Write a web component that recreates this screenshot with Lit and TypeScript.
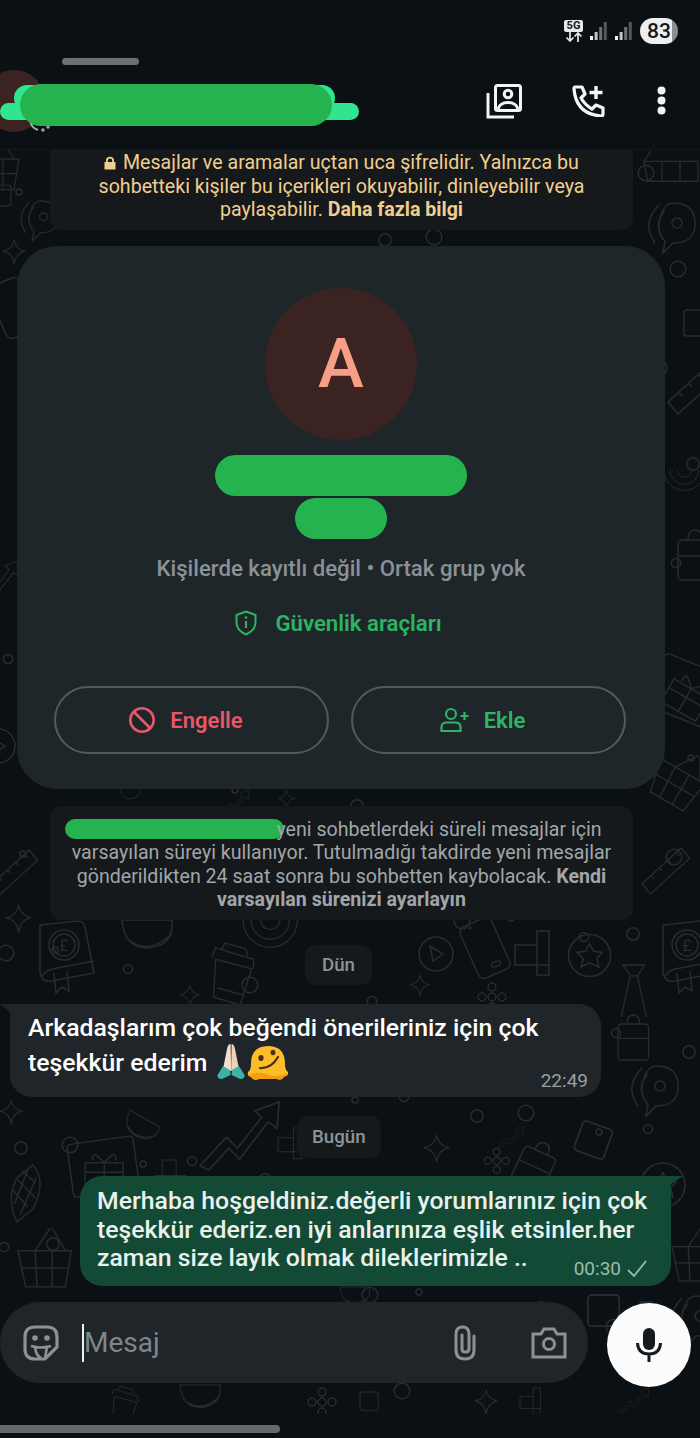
import { LitElement, html, css, svg } from 'lit';
import { customElement } from 'lit/decorators.js';

// wallpaper doodles, each drawn in a box of roughly 60x60
const shapes: Record<string, unknown> = {
  book: svg`<path d="M6 4 L44 0 Q50 0 51 6 L60 52 L18 60 Q8 62 6 52 Z"/><circle cx="30" cy="24" r="15"/><circle cx="30" cy="24" r="11"/><text x="30" y="30" font-size="16" text-anchor="middle" fill="#272c30" stroke="none" font-family="Roboto">£</text><path d="M8 56 Q10 50 18 48 L60 40 M20 52 L22 72 L28 66 L35 70 L33 50"/>`,
  cup: svg`<path d="M10 14 L48 24 L36 62 L8 54 Z M6 12 L10 2 L50 14 L50 24 M16 4 L20 -3 L42 3 L44 10 M12 44 L40 52"/>`,
  phone: svg`<rect x="10" y="0" width="34" height="56" rx="6" transform="rotate(-24 27 28)"/><ellipse cx="38" cy="44" rx="5" ry="2.5" transform="rotate(-24 38 44)"/><circle cx="12" cy="8" r="1"/>`,
  blocks: svg`<path d="M0 14 H22 V0 H34 V44 H22 V34 H0 Z M22 14 V34 H34"/>`,
  star: svg`<circle cx="30" cy="30" r="20"/><path d="M30 19 L34 26 L42 27 L37 33 L39 41 L30 37 L22 41 L24 33 L18 27 L26 26 Z"/>`,
  play: svg`<circle cx="26" cy="26" r="17"/><path d="M20 18 L33 26 L23 33 Z"/>`,
  tie: svg`<path d="M10 0 L34 0 L26 12 L18 12 Z M18 12 L8 58 M26 12 L36 58"/>`,
  chart: svg`<path d="M0 58 L24 32 L34 42 L56 14 L50 8 L72 0 L70 24 L62 18 L36 52 L26 42 L8 62 Z"/>`,
  gift: svg`<rect x="0" y="0" width="70" height="56" rx="4" transform="rotate(-8 35 28)"/><rect x="16" y="24" width="40" height="26"/><path d="M36 24 V50 M16 34 H56 M36 24 Q22 8 24 22 M36 24 Q50 8 48 22"/>`,
  corn: svg`<path d="M18 0 Q36 14 26 46 L12 62 Q-4 40 4 16 Z M5 18 L27 34 M8 8 L24 18 M2 30 L20 44 M14 4 L6 44 M24 12 L14 54"/>`,
  basket: svg`<path d="M0 24 H56 L50 62 H8 Z M18 24 L34 0 M36 0 L50 24 M4 42 H52 M18 24 L20 62 M36 24 L36 62"/>`,
  grid: svg`<path d="M0 6 H60 V28 H4 Z M20 6 V28 M40 6 V28 M0 6 L8 -6"/>`,
  waves: svg`<path d="M10 46 Q-4 26 14 8 M18 42 Q8 26 20 14 M28 6 Q52 6 50 30 Q48 46 28 46 L18 56 L20 44 Q10 34 16 18 Q20 6 28 6 Z"/><circle cx="32" cy="26" r="5"/>`,
  ruler: svg`<path d="M0 42 L46 0 L56 12 L10 54 Z M10 32 L14 36 M20 23 L24 27 M30 14 L34 18 M40 5 L44 9"/>`,
  sparkle: svg`<path d="M14 0 Q16 12 28 14 Q16 16 14 30 Q12 16 0 14 Q12 12 14 0 Z"/>`,
  flower: svg`<circle cx="12" cy="12" r="4"/><circle cx="12" cy="2" r="4"/><circle cx="22" cy="12" r="4"/><circle cx="12" cy="22" r="4"/><circle cx="2" cy="12" r="4"/>`,
  dish: svg`<path d="M0 0 H50 Q52 26 26 28 Q2 28 0 0 Z M10 22 Q28 34 50 14"/>`,
  rings: svg`<path d="M0 0 A34 34 0 0 0 68 0 M10 0 A24 24 0 0 0 58 0 M22 0 A12 12 0 0 0 46 0"/>`,
  square: svg`<rect x="0" y="0" width="26" height="26" rx="3"/>`,
  bag: svg`<rect x="0" y="10" width="34" height="40" rx="4"/><path d="M10 10 Q10 0 17 0 Q24 0 24 10 M0 26 H34"/>`,
};

const placed: [string, number, number, number?, number?][] = [
  ['basket', -26, 140, 0, 0.8], ['grid', 644, 156, 0, 0.9], ['waves', 645, 197, 0, 1],
  ['square', -10, 185, 0, 0.8], ['sparkle', 3, 240, 0, 0.8], ['waves', 18, 196, 0, 0.8],
  ['square', 684, 310, 0, 1], ['ruler', 668, 360, 0, 1], ['bag', 678, 530, 0, 1],
  ['gift', 672, 650, 30, 1], ['phone', -14, 280, 0, 1], ['chart', -30, 560, 0, 0.7],
  ['rings', 664, 470, 0, 0.6], ['play', -28, 720, 0, 1], ['basket', 672, 740, 30, 0.9],
  ['dish', 120, 788, 0, 0.4], ['chart', 220, 790, 0, 0.4], ['sparkle', 278, 790, 0, 0.6],
  ['ruler', -10, 850, 0, 0.85], ['ruler', 642, 848, 0, 0.85], ['sparkle', 6, 905, 0, 0.9],
  ['book', 34, 921, 0, 1], ['book', 657, 921, 0, 1], ['dish', 122, 920, 0, 1],
  ['cup', 206, 946, 0, 0.95], ['rings', 243, 920, 0, 0.8], ['phone', 458, 920, 0, 1],
  ['play', 410, 928, 0, 1], ['blocks', 515, 931, 0, 1], ['star', 558, 924, 0, 1.05],
  ['tie', 614, 965, 0, 0.9], ['sparkle', 410, 975, 0, 0.7], ['flower', 480, 985, 0, 1],
  ['sparkle', 180, 985, 0, 0.7], ['bag', 618, 1015, 0, 0.9], ['waves', 628, 1060, 0, 1],
  ['sparkle', 0, 1100, 0, 0.8], ['chart', 200, 1102, 0, 1.1], ['dish', 130, 1110, 30, 0.7],
  ['square', 584, 1120, 20, 1.2], ['bag', 530, 1136, 25, 1], ['blocks', 278, 1128, 0, 0.7],
  ['chart', 498, 1126, 0, 0.35], ['gift', 70, 1140, 0, 0.95], ['corn', 16, 1162, 10, 0.95],
  ['sparkle', 424, 1135, 0, 0.9], ['flower', 486, 1150, 0, 0.9], ['star', 630, 1152, 0, 1.1],
  ['blocks', 186, 1160, 90, 0.7], ['basket', 18, 1228, 0, 0.95], ['basket', 672, 1225, 0, 0.9],
  ['square', 588, 1295, 0, 1.2], ['blocks', 618, 1302, 0, 1], ['waves', 668, 1290, 0, 1],
  ['dish', 340, 1287, 0, 0.6], ['cup', 108, 1388, 0, 0.6], ['dish', 180, 1385, 0, 0.8],
  ['flower', 310, 1390, 0, 1], ['sparkle', 475, 1390, 0, 0.8], ['blocks', 520, 1388, 0, 0.6],
  ['square', 360, 1392, 0, 0.7], ['chart', 620, 1388, 0, 0.4],
];

// scattered little rings that fill the gaps of the wallpaper
const rings = Array.from({ length: 130 }, (_, i) => ({
  x: (i * 137 + 19) % 700,
  y: 155 + ((i * 211 + 37) % 1250),
  r: 3 + (i % 4) * 1.6,
}));

@customElement('app-root')
export class AppRoot extends LitElement {
  static styles = css`
    :host {
      display: block;
      position: relative;
      width: 700px;
      height: 1438px;
      overflow: hidden;
      background: #0b1014;
      font-family: Roboto, "Noto Sans", sans-serif;
      color: #fff;
    }
    * { box-sizing: border-box; }

    .wallpaper {
      position: absolute;
      inset: 0;
      fill: none;
      stroke: #272c30;
      stroke-width: 1.5;
    }

    header {
      position: relative;
      height: 150px;
      padding-top: 18px;
      background: #0b1014;
      border-bottom: 1px solid #14191c;
    }
    .status { display: flex; justify-content: flex-end; align-items: center; height: 26px; padding-right: 22px; }
    .net { width: 19px; margin-right: 7px; display: flex; flex-direction: column; align-items: center; }
    .net b {
      width: 19px; height: 12px; border-radius: 2px; background: #e8e8e8; color: #14181b;
      font-size: 11px; line-height: 12px; text-align: center; font-weight: 700;
    }
    .bars { margin-right: 8px; }
    .battery {
      width: 38px; height: 26px; border-radius: 13px; color: #14181b;
      background: linear-gradient(90deg, #efefef 84%, #8b8d8f 84%);
      font-size: 21px; line-height: 26px; text-align: center; font-weight: 500;
    }
    .grabber { width: 77px; height: 7px; margin: 14px 0 0 62px; border-radius: 4px; background: #6d6f72; }
    .bar { display: flex; align-items: center; height: 62px; margin-top: 5px; padding-right: 34px; }
    .avatar {
      width: 62px; height: 62px; margin-left: -17px; padding-left: 16px; border-radius: 50%; background: #3a2320;
      color: #f79f85; font-size: 24px; line-height: 62px; text-align: center; font-weight: 500;
    }
    .spacer { flex: 1; }
    .bar svg { display: block; }
    .photos { margin-right: 50px; }
    .call { margin-right: 52px; }
    .spin { position: absolute; left: 28px; top: 120px; }

    .mark { position: absolute; background: #25b350; border-radius: 22px; }
    .mark.light { background: #2fe68f; }
    .mark.m1 { left: 14px; top: 85px; width: 321px; height: 26px; }
    .mark.m2 { left: 0; top: 103px; width: 359px; height: 17px; }
    .mark.m3 { left: 20px; top: 84px; width: 312px; height: 42px; }

    main { position: relative; display: flex; flex-direction: column; }

    .note {
      align-self: flex-start;
      width: 583px;
      margin-left: 50px;
      background: #15191c;
      border-radius: 12px;
      text-align: center;
    }
    .crypt { height: 80px; padding: 1px 30px 0; color: #f0cf8e; font-size: 19.6px; line-height: 23.5px; border-radius: 0 0 12px 12px; }
    .crypt svg { vertical-align: -1px; margin-right: 2px; }
    .crypt b { font-weight: 700; }

    .card {
      width: 648px;
      height: 543px;
      margin: 16px 0 0 17px;
      padding-top: 42px;
      border-radius: 40px;
      background: #1f262a;
      display: flex;
      flex-direction: column;
      align-items: center;
    }
    .face {
      width: 152px; height: 152px; border-radius: 50%; background: #3a2320; color: #f79f85;
      font-size: 69px; line-height: 152px; text-align: center; font-weight: 500;
    }
    .name { width: 252px; height: 41px; margin-top: 15px; border-radius: 21px; background: #25b350; }
    .name.short { width: 92px; height: 41px; margin-top: 2px; }
    .sub { margin-top: 17px; color: #8b9296; font-size: 22.2px; line-height: 24px; font-weight: 500; }
    .tools {
      display: flex; align-items: center; gap: 18px; margin: 26px 5px 0 0; height: 34px;
      color: #2bb563; font-size: 22.2px; font-weight: 600;
    }
    .actions { display: flex; gap: 22px; margin: 46px 2px 0 0; }
    .btn {
      width: 275px; height: 68px; padding-right: 12px; border: 2px solid #55595c; border-radius: 34px;
      display: flex; align-items: center; justify-content: center; gap: 14px;
      font-size: 22px; font-weight: 600;
    }
    .btn.red { color: #e8566a; }
    .btn.green { color: #2fb467; }

    .sys { height: 114px; margin-top: 17px; padding: 12px 16px 0; color: #a1a6a9; font-size: 19.6px; line-height: 23.3px; }
    .sys b { font-weight: 700; }
    .sys i { display: inline-block; width: 219px; height: 20px; margin: 0 -8px 0 -16px; vertical-align: -3px; border-radius: 10px; background: #25b350; }

    .date {
      align-self: flex-start; height: 40px; padding: 0 19px; border-radius: 10px; background: #15191c;
      color: #8d9397; font-size: 18.7px; line-height: 40px; font-weight: 500;
    }
    .date.d1 { margin: 25px 0 0 305px; padding: 0 17px; }
    .date.d2 { margin: 19px 0 0 297px; padding: 0 15px; height: 42px; line-height: 42px; }

    .msg { position: relative; align-self: flex-start; font-weight: 500; }
    .in {
      width: 591px; height: 93px; margin: 19px 0 0 10px; padding: 6px 13px 0 18px;
      background: #1f2528; border-radius: 0 22px 22px 22px; font-size: 24.8px; line-height: 35px;
    }
    .in::before {
      content: ''; position: absolute; left: -10px; top: 0; width: 22px; height: 18px;
      background: #1f2528; clip-path: polygon(0 0, 100% 0, 100% 100%);
    }
    .in .line { display: flex; align-items: center; margin-top: -2px; }
    .in .line svg { display: block; margin-left: 10px; }
    .in time { display: block; margin-top: -11px; text-align: right; }
    time { color: #9aa0a3; font-size: 19px; line-height: 22px; font-weight: 400; }

    .out {
      width: 591px; height: 110px; margin: 18px 0 0 80px; padding: 11px 14px 0 17px;
      background: #134a36; border-radius: 22px 0 22px 22px; color: #e9f1ee; font-size: 24.8px; line-height: 28.5px;
    }
    .out::after {
      content: ''; position: absolute; right: -12px; top: 0; width: 24px; height: 16px;
      background: #134a36; clip-path: polygon(0 0, 100% 0, 0 100%);
    }
    .out .last { display: flex; justify-content: space-between; }
    .out time { display: flex; align-items: center; gap: 6px; margin: 13px 10px 0 0; color: #9dbaae; line-height: 24px; }

    .compose { display: flex; align-items: flex-start; margin-top: 16px; }
    .input {
      width: 588px; height: 81px; padding: 0 21px 0 23px; border-radius: 40px; background: #1f2528;
      display: flex; align-items: center; color: #7f8689;
    }
    .caret { width: 2px; height: 38px; margin-left: 23px; background: #f0f0f0; }
    .input span { flex: 1; font-size: 28px; line-height: 38px; }
    .clip { margin-right: 53px; }
    .mic {
      width: 84px; height: 84px; margin: 1px 0 0 19px; border-radius: 50%; background: #fbfbfb;
      display: flex; align-items: center; justify-content: center;
    }
    .foot { height: 28px; margin-top: 27px; padding-top: 11px; background: #0b1014; }
    .home { width: 280px; height: 8px; border-radius: 0 4px 4px 0; background: #66686a; }
  `;

  private signal() {
    return html`<svg class="bars" width="17" height="18" viewBox="0 0 17 18">
      <rect x="0" y="14" width="3" height="4" fill="#f0f0f0"/>
      <rect x="4.6" y="10" width="3" height="8" fill="#c4c4c4"/>
      <rect x="9.2" y="5" width="3" height="13" fill="#6e7072"/>
      <rect x="13.8" y="0" width="3" height="18" fill="#54565a"/>
    </svg>`;
  }

  render() {
    return html`
      <svg class="wallpaper" width="700" height="1438" viewBox="0 0 700 1438">
        ${rings.map((d) => svg`<circle cx=${d.x} cy=${d.y} r=${d.r}/>`)}
        ${placed.map(([k, x, y, rot = 0, s = 1]) => svg`<g transform="translate(${x} ${y}) rotate(${rot}) scale(${s})">${shapes[k]}</g>`)}
      </svg>

      <header>
        <div class="status">
          <div class="net">
            <b>5G</b>
            <svg width="18" height="10" viewBox="0 0 18 10" fill="none" stroke="#e8e8e8" stroke-width="1.7">
              <path d="M5 0 V9 M1.5 5.5 L5 9 L8.5 5.5 M13 10 V1 M9.5 4.5 L13 1 L16.5 4.5"/>
            </svg>
          </div>
          ${this.signal()}${this.signal()}
          <div class="battery">83</div>
        </div>
        <div class="grabber"></div>
        <div class="bar">
          <div class="avatar">A</div>
          <div class="spacer"></div>
          <svg class="photos" width="36" height="35" viewBox="0 0 36 35" fill="none" stroke="#f4f4f4" stroke-width="3">
            <rect x="9.5" y="1.5" width="25" height="25" rx="2"/>
            <circle cx="22" cy="10" r="3.8"/>
            <path d="M12 25 Q14 18.5 22 18.5 Q30 18.5 32 25"/>
            <path d="M2 9 V33 H28"/>
          </svg>
          <svg class="call" width="33" height="32" viewBox="0 0 33 32" fill="none" stroke="#f4f4f4" stroke-width="3.2" stroke-linejoin="round">
            <path d="M3 2 H10 L13 9 L9 13 Q13 20 20 24 L24 20 L31 23 V29 Q31 31 29 31 Q4 29 2 4 Q2 2 3 2 Z"/>
            <path d="M24 1 V14 M17.5 7.5 H30.5" stroke-width="3.4"/>
          </svg>
          <svg width="9" height="30" viewBox="0 0 9 30" fill="#f4f4f4">
            <circle cx="4.5" cy="4.5" r="4"/><circle cx="4.5" cy="14.5" r="4"/><circle cx="4.5" cy="24.5" r="4"/>
          </svg>
        </div>
        <svg class="spin" width="24" height="16" viewBox="0 0 24 16" fill="none" stroke="#a8abad" stroke-width="2">
          <path d="M2 0 Q3 8 10 10"/><circle cx="15" cy="10" r=".7"/><circle cx="20" cy="7" r=".7"/>
        </svg>
        <div class="mark light m1"></div>
        <div class="mark light m2"></div>
        <div class="mark m3"></div>
      </header>

      <main>
        <div class="note crypt">
          <svg width="12" height="14" viewBox="0 0 12 14" fill="#f0cf8e">
            <path d="M2 6 V4.5 Q2 .8 6 .8 Q10 .8 10 4.5 V6 H11.5 V13.5 H.5 V6 Z M3.8 6 H8.2 V4.5 Q8.2 2.4 6 2.4 Q3.8 2.4 3.8 4.5 Z"/>
          </svg>
          Mesajlar ve aramalar uçtan uca şifrelidir. Yalnızca bu sohbetteki kişiler bu içerikleri okuyabilir, dinleyebilir veya paylaşabilir. <b>Daha fazla bilgi</b>
        </div>

        <section class="card">
          <div class="face">A</div>
          <div class="name"></div>
          <div class="name short"></div>
          <div class="sub">Kişilerde kayıtlı değil • Ortak grup yok</div>
          <div class="tools">
            <svg width="22" height="26" viewBox="0 0 22 26" fill="none" stroke="#2bb563" stroke-width="2">
              <path d="M11 1.5 L20.5 5 V12 Q20.5 20.5 11 24.5 Q1.5 20.5 1.5 12 V5 Z"/>
              <path d="M11 11 V18" stroke-width="2.2"/><circle cx="11" cy="7.5" r="1.3" fill="#2bb563" stroke="none"/>
            </svg>
            Güvenlik araçları
          </div>
          <div class="actions">
            <div class="btn red">
              <svg width="28" height="28" viewBox="0 0 28 28" fill="none" stroke="#e8566a" stroke-width="2.6">
                <circle cx="14" cy="14" r="11.7"/><path d="M6 6 L22 22"/>
              </svg>
              Engelle
            </div>
            <div class="btn green">
              <svg width="30" height="26" viewBox="0 0 30 26" fill="none" stroke="#2fb467" stroke-width="2.2">
                <circle cx="11" cy="7" r="5"/>
                <path d="M1.5 24 V20 Q1.5 15.5 7 15.5 H15 Q20.5 15.5 20.5 20 V24 Z"/>
                <path d="M24.5 5 V13 M20.5 9 H28.5"/>
              </svg>
              Ekle
            </div>
          </div>
        </section>

        <div class="note sys">
          <i></i>yeni sohbetlerdeki süreli mesajlar için varsayılan süreyi kullanıyor. Tutulmadığı takdirde yeni mesajlar gönderildikten 24 saat sonra bu sohbetten kaybolacak. <b>Kendi varsayılan sürenizi ayarlayın</b>
        </div>

        <div class="date d1">Dün</div>

        <div class="msg in">
          Arkadaşlarım çok beğendi önerileriniz için çok
          <div class="line">
            teşekkür ederim
            <svg width="72" height="38" viewBox="0 0 72 38">
              <path d="M6 26 L10 6 Q11 1 13.6 1 L14.2 28 Z" fill="#f6dcc9"/>
              <path d="M22 26 L18 6 Q17 1 14.6 1 L14.2 28 Z" fill="#efd0ba"/>
              <path d="M6 23 L0.5 32 Q0 36 5 36 L13.5 32 L13 27 Z M22 23 L27.5 32 Q28 36 23 36 L14.5 32 L15 27 Z" fill="#3cb4a3"/>
              <path d="M34 21 Q34 3 51 3 Q68 3 68 21 Q68 27 71 29 Q72 33 67 33 Q66 38 60 36 H42 Q36 38 34 34 Q30 33 31 29 Q34 27 34 21 Z" fill="#fbbd2a"/>
              <path d="M33 31 Q44 28 52 32 Q62 35 70 30 Q71 34 66 34 Q65 38 60 36 H42 Q36 38 34 34 Z" fill="#f59c14"/>
              <ellipse cx="44" cy="15" rx="2.6" ry="3" fill="#4a2f0d"/><ellipse cx="56" cy="9.5" rx="2.4" ry="2.8" fill="#4a2f0d"/>
              <path d="M43 25 Q54 26 61 14" fill="none" stroke="#4a2f0d" stroke-width="2.2" stroke-linecap="round"/>
            </svg>
          </div>
          <time>22:49</time>
        </div>

        <div class="date d2">Bugün</div>

        <div class="msg out">
          Merhaba hoşgeldiniz.değerli yorumlarınız için çok<br>
          teşekkür ederiz.en iyi anlarınıza eşlik etsinler.her
          <div class="last">
            <span>zaman size layık olmak dileklerimizle ..</span>
            <time>00:30
              <svg width="20" height="18" viewBox="0 0 20 18" fill="none" stroke="#9dbaae" stroke-width="1.8"><path d="M1 10 L7 16 L19 1"/></svg>
            </time>
          </div>
        </div>

        <div class="compose">
          <div class="input">
            <svg width="36" height="36" viewBox="0 0 36 36" fill="none" stroke="#8b9194" stroke-width="3.2">
              <path d="M12 2 H24 Q34 2 34 12 V22 L22 34 H12 Q2 34 2 24 V12 Q2 2 12 2 Z"/>
              <path d="M8 21 Q18 24 28 21 M12 22 Q13 31 18 33 M24 22 L22 33" stroke-width="2.6"/>
              <circle cx="12" cy="13" r="2.8" fill="#8b9194" stroke="none"/><circle cx="24" cy="13" r="2.8" fill="#8b9194" stroke="none"/>
            </svg>
            <div class="caret"></div>
            <span>Mesaj</span>
            <svg class="clip" width="26" height="36" viewBox="0 0 26 36" fill="none" stroke="#8b9194" stroke-width="3" stroke-linecap="round">
              <path d="M22 11 V25 Q22 34 13 34 Q4 34 4 25 V9 Q4 2 10.5 2 Q17 2 17 9 V24 Q17 27 13.5 27 Q10 27 10 24 V10"/>
            </svg>
            <svg width="36" height="32" viewBox="0 0 36 32" fill="none" stroke="#8b9194" stroke-width="3">
              <path d="M2 7 H10 L13 2 H23 L26 7 H34 V30 H2 Z"/>
              <circle cx="18" cy="17" r="5.5"/>
            </svg>
          </div>
          <div class="mic">
            <svg width="26" height="34" viewBox="0 0 26 34" fill="none" stroke="#141a1e" stroke-width="3">
              <rect x="7" y="0" width="12" height="22" rx="6" fill="#141a1e" stroke="none"/>
              <path d="M1.5 15 Q2 26 13 26 Q24 26 24.5 15 M13 26 V34"/>
            </svg>
          </div>
        </div>
        <div class="foot"><div class="home"></div></div>
      </main>
    `;
  }
}
